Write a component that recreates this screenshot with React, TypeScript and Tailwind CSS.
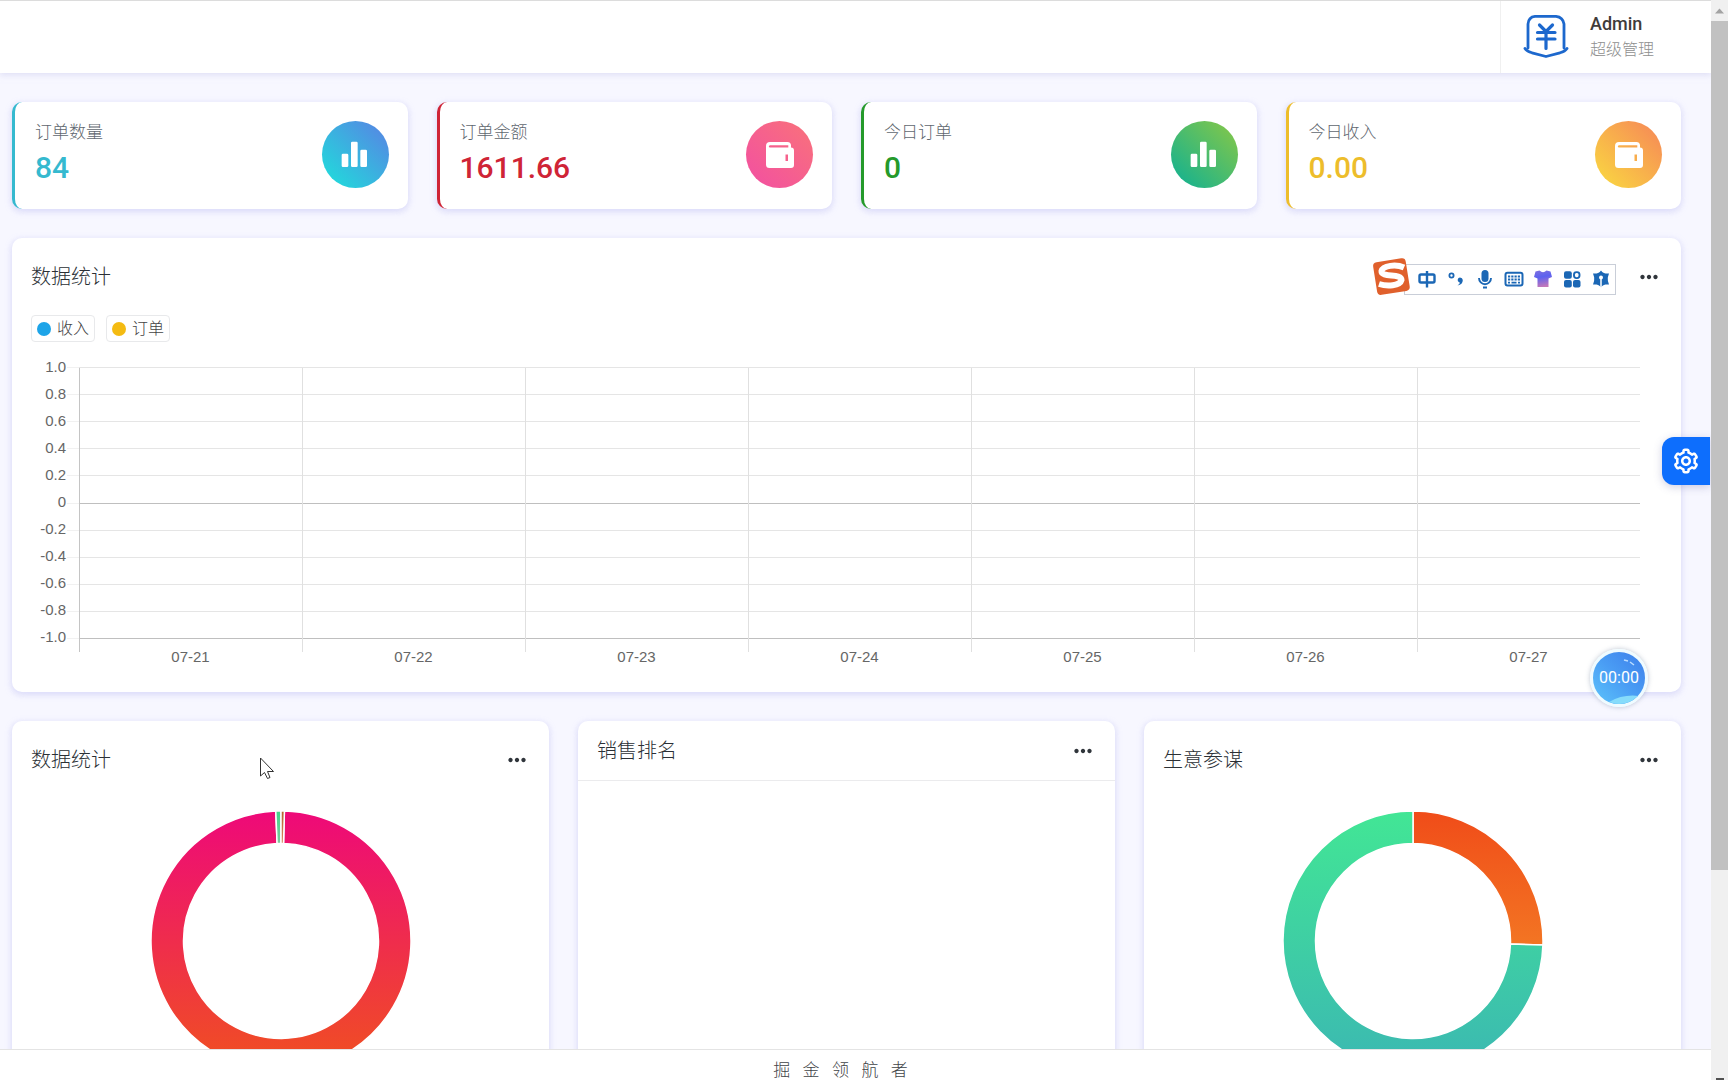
import React from "react";
import { BiCog, BiDotsHorizontalRounded, BiSolidBarChartAlt2 } from "react-icons/bi";

const cardShadow =
  "shadow-[0_2px_6px_rgba(218,218,253,0.65),0_2px_6px_rgba(206,206,238,0.54)]";

function BarsIcon() {
  return <BiSolidBarChartAlt2 className="size-8" />;
}

function WalletIcon() {
  return (
    <svg viewBox="0 0 28 26" className="h-[26px] w-7">
      <path
        fill="currentColor"
        fillRule="evenodd"
        d="M4 0H21.500Q24.500 0 25 3V5.500Q28 5.500 28 8.500V23Q28 26 25 26H3.500Q0 26 0 22.500V4Q0 0 4 0ZM4 3.200Q2.800 3.500 2.800 4.400Q2.900 5.500 4 5.500H22.300V3.200ZM19.500 12.500V19H22V12.500Z"
      />
    </svg>
  );
}

const stats = [
  {
    label: "订单数量",
    value: "84",
    border: "border-[#35b9cf]",
    text: "text-[#35b9cf]",
    gradient: "bg-linear-[45deg,#1ce2db,#5a80e4]",
    Icon: BarsIcon,
  },
  {
    label: "订单金额",
    value: "1611.66",
    border: "border-[#cf2436]",
    text: "text-[#cf2436]",
    gradient: "bg-linear-[45deg,#f24fa2,#f9727a]",
    Icon: WalletIcon,
  },
  {
    label: "今日订单",
    value: "0",
    border: "border-[#259a2b]",
    text: "text-[#259a2b]",
    gradient: "bg-linear-[45deg,#0cb095,#8ac845]",
    Icon: BarsIcon,
  },
  {
    label: "今日收入",
    value: "0.00",
    border: "border-[#edbd2b]",
    text: "text-[#edbd2b]",
    gradient: "bg-linear-[45deg,#fadb40,#f68558]",
    Icon: WalletIcon,
  },
];

const yLabels = ["1.0", "0.8", "0.6", "0.4", "0.2", "0", "-0.2", "-0.4", "-0.6", "-0.8", "-1.0"];
const days = ["07-21", "07-22", "07-23", "07-24", "07-25", "07-26", "07-27"];

function BrandMark() {
  return (
    <svg viewBox="0 0 48 46" className="h-[46px] w-12" fill="none" stroke="#1d68cd" strokeLinejoin="round" strokeLinecap="round">
      <path d="M6 34V10Q6.500 3 13 2.300H34Q41 3 42 10V34" strokeWidth="2.800" />
      <path d="M3 34.500C5 37.500 7 38 10 38.800L24 42.500L38 38.800C41 38 43 37.500 45 34.500" strokeWidth="2.800" />
      <path d="M17.500 11L24 17.500L30.500 11M15.500 18.500H33M15.500 25H33M24 18V34.500" strokeWidth="3.200" />
    </svg>
  );
}

function MoreButton() {
  return (
    <button type="button" aria-label="更多" className="text-[#30353b]">
      <BiDotsHorizontalRounded className="size-[26px]" />
    </button>
  );
}

function StatCard({ stat }: { stat: (typeof stats)[number] }) {
  const { Icon } = stat;
  return (
    <article className={`flex h-[107px] items-center justify-between rounded-[10px] border-l-3 bg-white pr-[19px] pb-1 pl-5 ${cardShadow} ${stat.border}`}>
      <div>
        <p className="text-[17px] leading-6 font-light text-[#5f676f]">{stat.label}</p>
        <p className={`mt-1 text-[30px] leading-10 font-medium ${stat.text}`}>{stat.value}</p>
      </div>
      <div className={`mt-0.5 flex size-[67px] items-center justify-center rounded-full text-white ${stat.gradient}`}>
        <Icon />
      </div>
    </article>
  );
}

function LegendItem({ label, dot }: { label: string; dot: string }) {
  return (
    <li className="flex h-[27px] items-center gap-1.5 rounded-sm border border-[#e8e9eb] px-[5px] text-[16px] font-light text-[#444]">
      <span className={`size-[14px] rounded-full ${dot}`} />
      {label}
    </li>
  );
}

function TrendChart() {
  return (
    <div className="flex pr-[41px]">
      <div className="flex h-[298px] w-[54px] flex-col text-right font-['Liberation_Sans',Arial,sans-serif] text-[15px] text-[#666]">
        {yLabels.map((l) => (
          <span key={l} className="flex flex-1 items-center justify-end pb-0.5 leading-5">{l}</span>
        ))}
      </div>
      <div className="ml-[13px] flex-1">
        <svg className="block h-[298px] w-full overflow-visible" shapeRendering="crispEdges">
          {yLabels.map((l, i) => {
            const y = `${((i + 0.5) / 11) * 100}%`;
            return (
              <g key={l}>
                <line x1="-12" x2="0" y1={y} y2={y} stroke="#f1f1f1" />
                <line x1="0" x2="100%" y1={y} y2={y} stroke={l === "0" || l === "-1.0" ? "#bfbfbf" : "#e5e5e5"} />
              </g>
            );
          })}
          {[0, 1, 2, 3, 4, 5, 6].map((i) => (
            <line key={i} x1={`${(i / 7) * 100}%`} x2={`${(i / 7) * 100}%`} y1="14" y2="298" stroke={i === 0 ? "#c4c4c4" : "#e0e0e0"} />
          ))}
        </svg>
        <div className="grid grid-cols-7 text-center font-['Liberation_Sans',Arial,sans-serif] text-[15px] leading-[10px] text-[#666]">
          {days.map((d) => (
            <span key={d}>{d}</span>
          ))}
        </div>
      </div>
    </div>
  );
}

function ringSlice(start: number, end: number, outer = 130, inner = 97.5) {
  const at = (deg: number, r: number) => {
    const a = ((deg - 90) * Math.PI) / 180;
    return `${130 + r * Math.cos(a)} ${130 + r * Math.sin(a)}`;
  };
  const large = end - start > 180 ? 1 : 0;
  return `M${at(start, outer)}A${outer} ${outer} 0 ${large} 1 ${at(end, outer)}L${at(end, inner)}A${inner} ${inner} 0 ${large} 0 ${at(start, inner)}Z`;
}

type Slice = { start: number; end: number; from: string; to: string };

function Donut({ id, slices }: { id: string; slices: Slice[] }) {
  return (
    <svg viewBox="0 0 260 260" className="mx-auto mt-3 block size-[260px] overflow-visible">
      <defs>
        {slices.map((s, i) => (
          <linearGradient key={i} id={`${id}-${i}`} x1="0" y1="0" x2="0" y2="1">
            <stop offset="0" stopColor={s.from} />
            <stop offset="1" stopColor={s.to} />
          </linearGradient>
        ))}
      </defs>
      {slices.map((s, i) => (
        <path key={i} d={ringSlice(s.start, s.end)} fill={`url(#${id}-${i})`} stroke="#fff" strokeWidth="1.500" />
      ))}
    </svg>
  );
}

function DonutCard({ title, id, slices }: { title: string; id: string; slices: Slice[] }) {
  return (
    <section className={`h-[520px] rounded-[10px] bg-white ${cardShadow}`}>
      <div className="flex h-[78px] items-center justify-between px-[19px]">
        <h2 className="text-[20px] font-light text-[#2b3035]">{title}</h2>
        <MoreButton />
      </div>
      <Donut id={id} slices={slices} />
    </section>
  );
}

function ImeBar() {
  const blue = "#1b67b5";
  return (
    <div className="absolute top-[257px] right-[95px] flex items-center">
      <svg viewBox="0 0 40 40" className="z-10 -mr-2 size-10">
        <rect x="3" y="3" width="33" height="33" rx="4" fill="#e0602c" transform="rotate(-9 20 20)" />
        <path d="M32 10.500C24 7 11 8.500 9.500 14C9 21 29.500 16 29.500 23C28 29 15 29.500 7 27" fill="none" stroke="#fff" strokeWidth="6" />
      </svg>
      <div className="mt-1 flex h-[31px] w-[212px] items-center gap-[9px] border border-[#c9ced8] bg-white pl-3">
        <svg viewBox="0 0 20 20" className="size-5" fill="none" stroke={blue} strokeWidth="2.400">
          <rect x="2.500" y="5.500" width="15" height="8" rx="1.500" />
          <path d="M10 2V18.500" />
        </svg>
        <svg viewBox="0 0 20 20" className="size-5">
          <circle cx="5.500" cy="6.500" r="2.100" fill="none" stroke={blue} strokeWidth="1.800" />
          <path d="M14 8.500A2.500 2.500 0 0 0 13 13.200Q13.500 13.500 14 13.400Q13.800 15 11.500 16.500Q16.800 15.500 16.800 11Q16.500 8.500 14 8.500" fill={blue} />
        </svg>
        <svg viewBox="0 0 20 20" className="size-5">
          <rect x="6.500" y="1" width="7" height="12" rx="3.500" fill={blue} />
          <path d="M4 9A6 6.300 0 0 0 16 9M8 18.500H12" fill="none" stroke={blue} strokeWidth="1.900" />
        </svg>
        <svg viewBox="0 0 20 20" className="size-5" fill="none" stroke={blue}>
          <rect x="1.500" y="3.800" width="17" height="12.800" rx="2" strokeWidth="2" />
          <path d="M4 7.400H16M4 10.500H16" strokeWidth="2" strokeDasharray="2.200 1.060" />
          <path d="M4 13.600H6M7.500 13.600H12.500M14 13.600H16" strokeWidth="1.900" />
        </svg>
        <svg viewBox="0 0 20 20" className="size-5">
          <defs>
            <linearGradient id="shirt" x1="0.300" y1="0" x2="0.500" y2="1">
              <stop offset="0" stopColor="#7b6ee0" />
              <stop offset="0.400" stopColor="#5c62f0" />
              <stop offset="1" stopColor="#c678b8" />
            </linearGradient>
          </defs>
          <path d="M6.500 1.500Q10 5 13.500 1.500L17.500 2.500L19 8L15.500 9.500V18H4.500V9.500L1 8L2.500 2.500Z" fill="url(#shirt)" />
        </svg>
        <svg viewBox="0 0 20 20" className="size-5" fill={blue}>
          <rect x="2" y="2.200" width="7.800" height="7.500" rx="2" />
          <rect x="2" y="11" width="7.800" height="7.500" rx="2" />
          <rect x="11" y="11" width="7.500" height="7.500" rx="2" />
          <rect x="12" y="3.100" width="5.500" height="6" rx="2.500" fill="none" stroke={blue} strokeWidth="1.900" />
        </svg>
        <svg viewBox="0 0 20 20" className="size-5">
          <path d="M10 1.500L12.500 4.500H18L16.300 10L18 15.500H12.500L10 18.500L7.500 15.500H2L3.700 10L2 4.500H7.500Z" fill={blue} />
          <circle cx="10" cy="10" r="6.800" fill={blue} />
          <path d="M10 19V9" stroke="#fff" strokeWidth="1.500" />
          <circle cx="10" cy="8.600" r="2" fill="#fff" />
        </svg>
      </div>
    </div>
  );
}

function TimerBubble() {
  return (
    <div className="absolute top-[649px] right-[63px] flex size-[58px] items-center justify-center overflow-hidden rounded-full border-3 border-[#effbff] bg-linear-[45deg,#5cc4fb,#4a9df4_50%,#3c7eea] shadow-[0_0_5px_rgba(90,110,140,0.4)]">
      <svg viewBox="0 0 52 52" className="absolute inset-0 size-full" fill="none">
        <path d="M16 50Q30 42 46 44Q34 55 22 52Z" fill="#86dcfb" />
        <path d="M31 8L35 9M37 10L41 13" stroke="#b9dcff" strokeWidth="1.500" />
      </svg>
      <span className="relative text-[16px] text-white">00:00</span>
    </div>
  );
}

function ScrollRail() {
  return (
    <div aria-hidden="true" className="flex w-[17px] shrink-0 flex-col overflow-hidden bg-[#f0f0f0]">
      <svg viewBox="0 0 17 21" className="h-[21px] w-[17px] shrink-0">
        <path d="M4 13.500L8.500 8.500L13 13.500Z" fill="#a3a3a3" />
      </svg>
      <div className="flex-[849] bg-[#c1c1c1]" />
      <div className="flex-[208]" />
      <div className="mx-auto h-[2px] w-2 shrink-0 bg-[#505050]" />
    </div>
  );
}

export default function App() {
  return (
    <div className="flex h-screen overflow-hidden bg-[#f7f7ff] font-[Roboto,'Noto_Sans_CJK_SC',sans-serif]">
      <div className="relative flex min-w-0 flex-1 flex-col overflow-hidden">
        <header className="z-10 flex h-[73px] shrink-0 justify-end border-t border-[#dcdcdc] bg-white shadow-[0_2px_6px_rgba(206,206,238,0.6)]">
          <button type="button" className="flex w-[211px] items-center border-l border-[#f0f0f0] pl-[21px] text-left">
            <BrandMark />
            <span className="ml-5 flex flex-col">
              <span className="text-[18px] leading-6 font-medium text-[#413c3a]">Admin</span>
              <span className="mt-0.5 text-[16px] leading-6 font-light text-[#8f8f8f]">超级管理</span>
            </span>
          </button>
        </header>

        <main className="flex min-h-0 flex-1 flex-col gap-[29px] overflow-hidden pt-[29px] pr-[30px] pl-3">
          <div className="grid shrink-0 grid-cols-4 gap-[29px]">
            {stats.map((s) => (
              <StatCard key={s.label} stat={s} />
            ))}
          </div>

          <section className={`h-[454px] shrink-0 rounded-[10px] bg-white ${cardShadow}`}>
            <div className="flex h-[77px] items-center justify-between px-[19px]">
              <h2 className="text-[20px] font-light text-[#2b3035]">数据统计</h2>
              <MoreButton />
            </div>
            <ul className="mb-3 flex gap-[11px] pl-[19px]">
              <LegendItem label="收入" dot="bg-[#1da4e8]" />
              <LegendItem label="订单" dot="bg-[#f4bb12]" />
            </ul>
            <TrendChart />
          </section>

          <div className="grid shrink-0 grid-cols-3 gap-[29px]">
            <DonutCard
              title="数据统计"
              id="orders"
              slices={[
                { start: 1.5, end: 357.7, from: "#ee0979", to: "#f05020" },
                { start: 357.7, end: 360, from: "#42d68a", to: "#7dc99d" },
                { start: 0, end: 1.5, from: "#b5622e", to: "#d98a62" },
              ]}
            />
            <section className={`h-[520px] rounded-[10px] bg-white ${cardShadow}`}>
              <div className="flex h-[60px] items-center justify-between border-b border-[#ebebed] px-[19px]">
                <h2 className="text-[20px] font-light text-[#2b3035]">销售排名</h2>
                <MoreButton />
              </div>
            </section>
            <DonutCard
              title="生意参谋"
              id="insight"
              slices={[
                { start: 0, end: 91.8, from: "#f04c19", to: "#f37523" },
                { start: 91.8, end: 360, from: "#42e695", to: "#3bb8b2" },
              ]}
            />
          </div>
        </main>

        <footer className="h-[31px] shrink-0 border-t border-[#e4e4e4] bg-white pt-2 pr-[30px] text-center text-[17px] leading-6 font-light whitespace-pre text-[#3f4448]">
          掘   金   领   航   者
        </footer>

        <ImeBar />
        <TimerBubble />
        <button
          type="button"
          aria-label="设置"
          className="absolute top-[437px] right-px flex size-12 items-center justify-center rounded-l-xl bg-[#0d6efd] text-white shadow-[0_2px_8px_rgba(100,100,160,0.3)]"
        >
          <BiCog className="size-[30px]" />
        </button>
        <svg viewBox="0 0 16 24" className="absolute top-[757px] left-[259px] h-6 w-4">
          <path d="M1.500 1V19L5.500 15.500L8.500 21.500L11 20.500L8.500 14.500H14.500Z" fill="#fff" stroke="#333" />
        </svg>
      </div>
      <ScrollRail />
    </div>
  );
}
